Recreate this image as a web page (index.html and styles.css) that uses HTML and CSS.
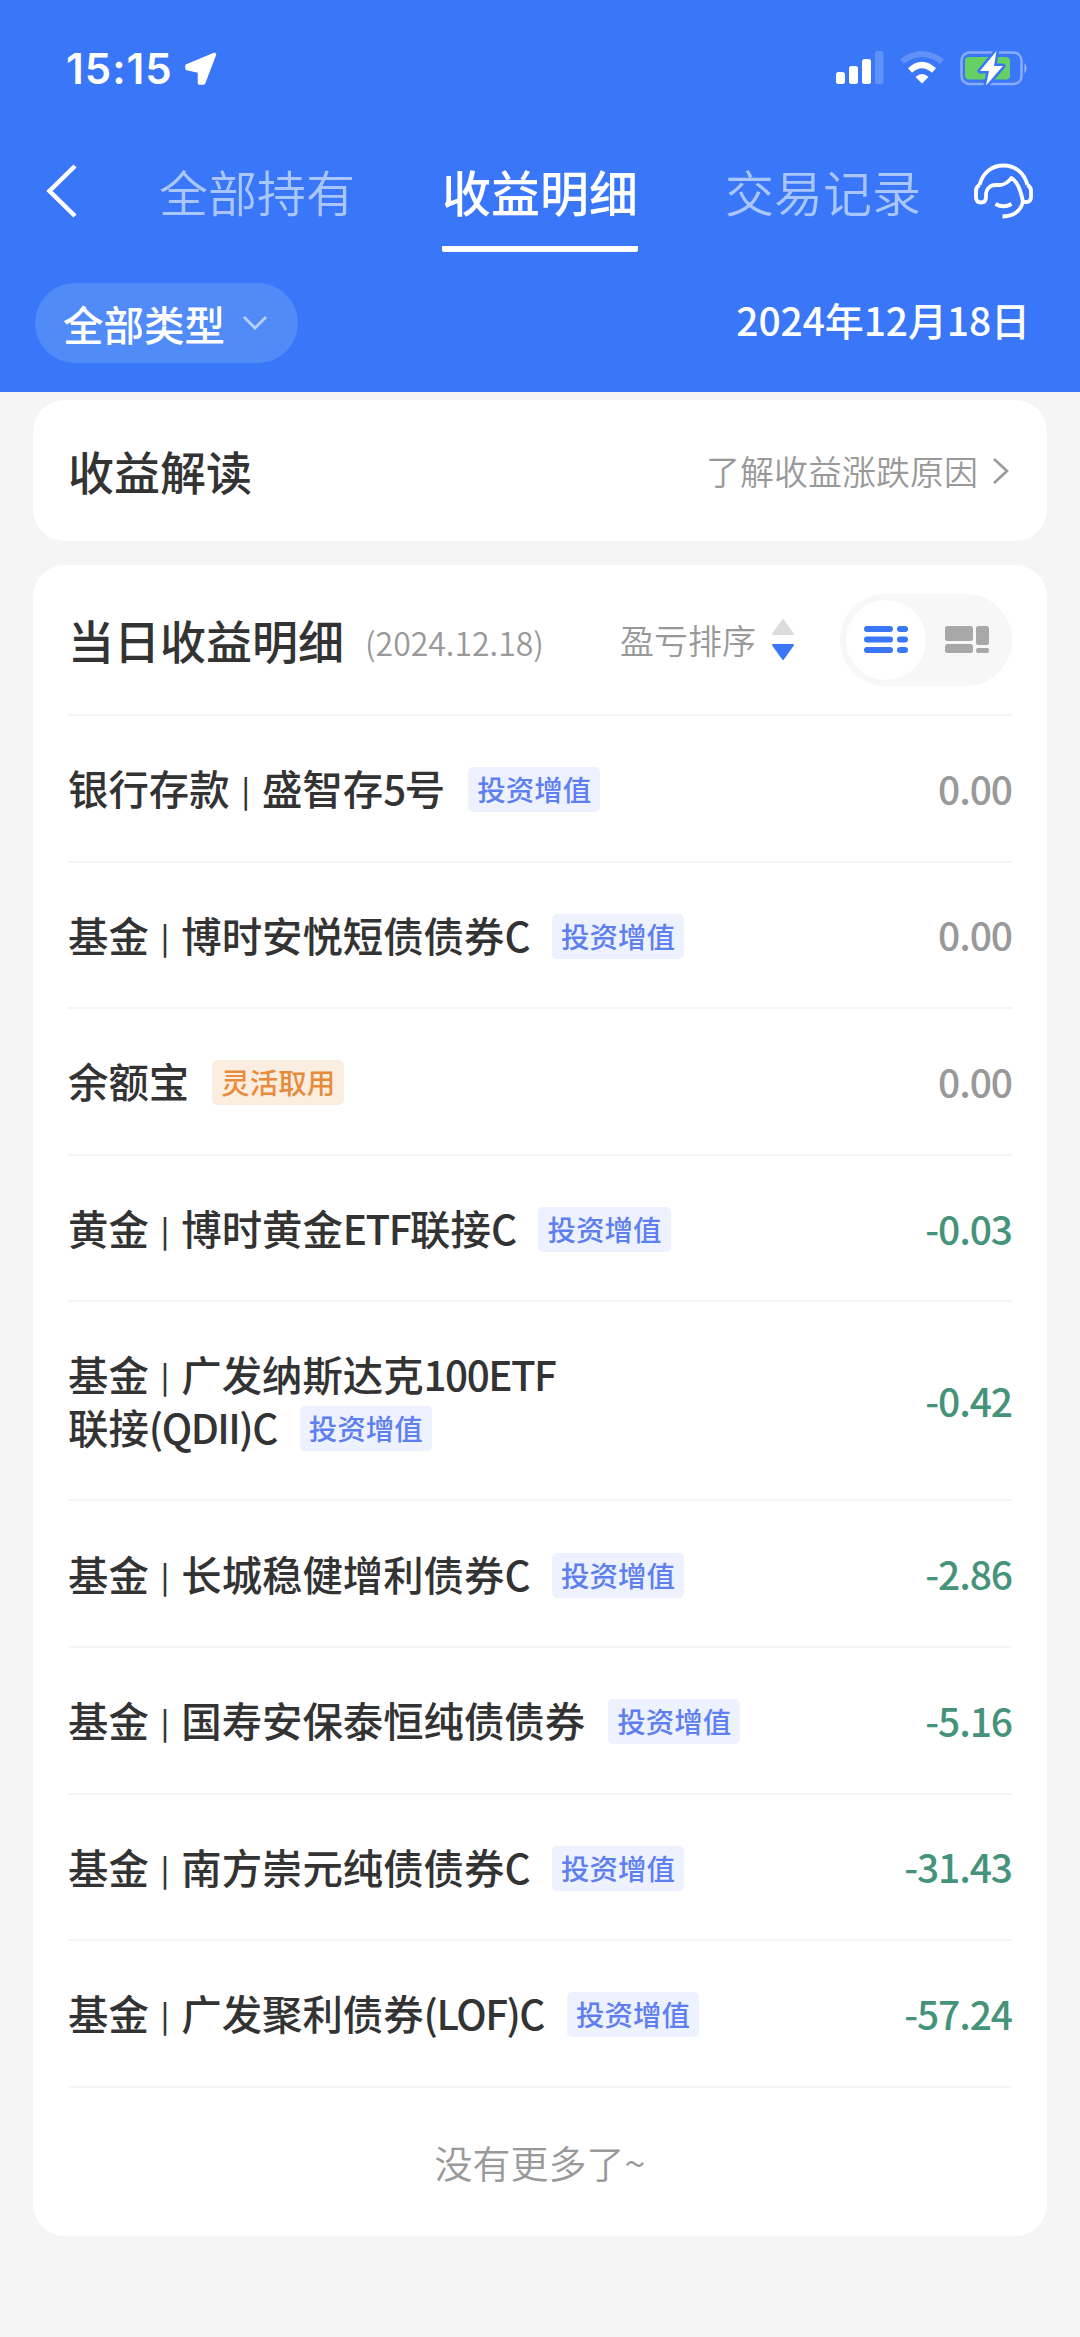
FILE: index.html
```html
<!DOCTYPE html>
<html lang="zh-CN">
<head>
<meta charset="utf-8">
<title>收益明细</title>
<link rel="stylesheet" href="styles.css">
</head>
<body>
<header class="header">
  <div class="status">
    <div class="status-left">
      <span class="clock">15:15</span>
      <svg class="location" width="34" height="34" viewBox="0 0 34 36" preserveAspectRatio="none"><path d="M30.500 2.500 19.500 33H15.500V20.500L3 17.500V14.500Z" fill="#fff" stroke="#fff" stroke-width="3.500" stroke-linejoin="round"/></svg>
    </div>
    <div class="status-right">
      <svg width="48" height="34" viewBox="0 0 48 34"><g fill="#fff"><rect x="0" y="22" width="9" height="12" rx="2.500"/><rect x="13" y="16" width="9" height="18" rx="2.500"/><rect x="26" y="9" width="9" height="25" rx="2.500"/><rect x="39" y="1" width="8.500" height="33" rx="2.500" opacity=".2"/></g></svg>
      <svg width="44" height="34" viewBox="0 0 44 34"><path d="M22 33.500 15.500 27Q22 21 28.500 27Z" fill="#fff"/><path d="M10 20.500Q22 9.500 34 20.500" fill="none" stroke="#fff" stroke-width="6"/><path d="M2 11.500Q22-3.500 42 11.500" fill="none" stroke="#fff" stroke-width="6" opacity=".2"/></svg>
      <svg width="70" height="38" viewBox="0 0 70 38"><rect x="1.500" y="2.500" width="60" height="31.500" rx="8" fill="none" stroke="#fff" stroke-width="2.500" opacity=".4"/><rect x="5" y="7" width="45" height="22.500" rx="4" fill="#65d064"/><path d="M64.500 13q4 5 0 11z" fill="#fff" opacity=".5"/><path d="M36.500 1 20 21H29L26 35.500 43 16H34Z" fill="#fff" stroke="#3976f8" stroke-width="5" paint-order="stroke" stroke-linejoin="round"/></svg>
    </div>
  </div>
  <nav class="nav">
    <svg class="back" width="32" height="54" viewBox="0 0 32 54"><path d="M29 2 3.500 27 29 52" fill="none" stroke="#fff" stroke-width="4.500"/></svg>
    <span class="tab">全部持有</span>
    <span class="tab tab-on">收益明细</span>
    <span class="tab">交易记录</span>
    <svg class="service" width="60" height="58" viewBox="0 0 60 58"><g fill="none" stroke="#fff" stroke-width="3.800" stroke-linejoin="round"><path d="M5.500 22C9 9.500 18 2.500 29.500 2.500S50 9.500 53.500 22"/><path d="M5.500 22Q2 24 2 28V34Q2 39.500 7 39.500T12 34V32C12 26 16 22 22 22H27Q33 21 37.300 15Q44 18.500 47.700 33L49 39H52Q57 39 57 34V28Q57 24 53.500 22"/><path d="M49 38Q46 53 28.500 53.500M21.500 41q8 4.500 16 0"/></g></svg>
  </nav>
  <div class="filters">
    <div class="pill"><span>全部类型</span><svg width="26" height="18" viewBox="0 0 26 18"><path d="M2 3 13 14 24 3" fill="none" stroke="#b9d0ff" stroke-width="2.800"/></svg></div>
    <span class="date">2024年12月18日</span>
  </div>
</header>
<main class="main">
  <section class="card insight">
    <h2 class="title">收益解读</h2>
    <a class="more"><span>了解收益涨跌原因</span><svg width="18" height="28" viewBox="0 0 18 28"><path d="M2 2 15 14 2 26" fill="none" stroke="#999" stroke-width="2.600"/></svg></a>
  </section>
  <section class="card detail">
    <div class="detail-head">
      <h2 class="title">当日收益明细</h2>
      <span class="day">(2024.12.18)</span>
      <span class="sort">盈亏排序</span>
      <svg class="arrows" width="24" height="44" viewBox="0 0 24 44"><path d="M12 2 22 16H2Z" fill="#dcdcdc" stroke="#dcdcdc" stroke-width="2" stroke-linejoin="round"/><path d="M12 41 22 27H2Z" fill="#3976f8" stroke="#3976f8" stroke-width="2" stroke-linejoin="round"/></svg>
      <div class="toggle">
        <span class="knob"><svg width="44" height="27" viewBox="0 0 44 27"><g fill="#3976f8"><rect y="0" width="29" height="6" rx="3"/><rect y="10.500" width="29" height="6" rx="3"/><rect y="21" width="29" height="6" rx="3"/><rect x="33" y="0" width="11" height="6" rx="3"/><rect x="33" y="10.500" width="11" height="6" rx="3"/><rect x="33" y="21" width="11" height="6" rx="3"/></g></svg></span>
        <svg class="grid" width="44" height="27" viewBox="0 0 44 27"><g fill="#a8a8a8"><rect width="28" height="15" rx="2.500"/><rect y="18" width="28" height="9" rx="2.500"/><rect x="31" width="13" height="19" rx="2.500"/><rect x="31" y="22" width="13" height="5" rx="2"/></g></svg>
      </div>
    </div>
    <ul class="list">
      <li class="row"><div class="name">银行存款<i>|</i>盛智存<b>5</b>号<span class="tag">投资增值</span></div><span class="num zero">0.00</span></li>
      <li class="row"><div class="name">基金<i>|</i>博时安悦短债债券<b>C</b><span class="tag">投资增值</span></div><span class="num zero">0.00</span></li>
      <li class="row"><div class="name">余额宝<span class="tag tag-flex">灵活取用</span></div><span class="num zero">0.00</span></li>
      <li class="row"><div class="name">黄金<i>|</i>博时黄金<b>ETF</b>联接<b>C</b><span class="tag">投资增值</span></div><span class="num">-0.03</span></li>
      <li class="row row-tall"><div class="name">基金<i>|</i>广发纳斯达克<b>100ETF</b><br>联接<b>(QDII)C</b><span class="tag">投资增值</span></div><span class="num">-0.42</span></li>
      <li class="row"><div class="name">基金<i>|</i>长城稳健增利债券<b>C</b><span class="tag">投资增值</span></div><span class="num">-2.86</span></li>
      <li class="row"><div class="name">基金<i>|</i>国寿安保泰恒纯债债券<span class="tag">投资增值</span></div><span class="num">-5.16</span></li>
      <li class="row"><div class="name">基金<i>|</i>南方崇元纯债债券<b>C</b><span class="tag">投资增值</span></div><span class="num">-31.43</span></li>
      <li class="row"><div class="name">基金<i>|</i>广发聚利债券<b>(LOF)C</b><span class="tag">投资增值</span></div><span class="num">-57.24</span></li>
    </ul>
    <p class="end">没有更多了~</p>
  </section>
</main>
</body>
</html>
```
FILE: styles.css
```css
* { box-sizing: border-box; margin: 0; padding: 0; }
body { width: 1080px; height: 2337px; background: #f5f5f5; color: #333; font-family: "Noto Sans CJK SC", sans-serif; overflow: hidden; }
svg { display: block; flex: none; }
.header { height: 392px; background: #3976f8; color: #fff; }
.status { height: 140px; display: flex; justify-content: space-between; padding: 0 50px 0 66px; }
.status-left { display: flex; align-items: flex-start; padding-top: 52px; }
.clock { font: 600 42px/34px Inter, sans-serif; width: 118px; white-space: nowrap; letter-spacing: 1px; }
.status-right { display: flex; align-items: flex-start; gap: 16px; padding-top: 50px; }
.nav { height: 143px; padding: 0 46px; display: flex; align-items: flex-start; }
.back { margin-top: 24px; }
.tab { font-size: 49px; line-height: 72px; font-weight: 350; color: #a9c6ff; margin-top: 15px; width: 196px; height: 97px; white-space: nowrap; }
.back + .tab { margin-left: 81px; }
.tab-on { color: #fff; font-weight: 500; margin-left: 87px; margin-right: 87px; background: linear-gradient(#fff, #fff) bottom / 100% 6px no-repeat; border-radius: 2px; }
.service { margin: 23px 0 0 auto; }
.filters { height: 80px; display: flex; justify-content: space-between; padding: 0 50px 0 35px; }
.pill { width: 263px; height: 80px; border-radius: 40px; background: #518bf8; display: flex; align-items: center; padding-left: 28px; gap: 17px; font-size: 40.500px; font-weight: 500; }
.date { font-size: 39px; font-weight: 500; line-height: 72px; letter-spacing: -.1px; }
.main { padding: 8px 33px 0; }
.card { background: #fff; border-radius: 32px; padding: 0 35px; }
.insight { height: 141px; display: flex; align-items: center; justify-content: space-between; padding-right: 37px; }
.title { font-size: 46px; font-weight: 500; line-height: 68px; white-space: nowrap; margin-bottom: 2px; }
.more { display: flex; align-items: center; gap: 14px; color: #999; font-size: 34px; font-weight: 350; }
.detail { height: 1671px; margin-top: 24px; }
.detail-head { height: 149px; display: flex; align-items: center; }
.day { color: #999; font-size: 32px; font-weight: 350; margin: 5px 0 0 21px; width: 255px; }
.sort { color: #999; font-size: 34px; font-weight: 350; width: 136px; white-space: nowrap; }
.arrows { margin-left: 15px; }
.toggle { width: 172px; height: 92px; border-radius: 46px; background: #f7f7f7; margin-left: auto; padding: 6px; display: flex; align-items: center; }
.knob { width: 80px; height: 80px; border-radius: 50%; background: #fff; display: grid; place-items: center; }
.grid { margin-left: 19px; }
.list { list-style: none; border-top: 2px solid #f5f5f5; }
.row { height: 146.600px; border-bottom: 2px solid #f5f5f5; display: flex; align-items: center; justify-content: space-between; padding-bottom: 1px; }
.row-tall { height: 199px; }
.name { font-size: 40.400px; line-height: 53px; font-weight: 500; white-space: nowrap; }
.name i { font-style: normal; font-size: 30px; margin: 0 12px; vertical-align: 3px; line-height: 1; }
.name b { font-weight: 500; letter-spacing: -1.500px; }
.tag { display: inline-block; height: 45px; line-height: 43px; padding: 0 9px; margin-left: 23px; border-radius: 5px; background: #eef1fe; color: #5e7ff0; font-size: 28.500px; font-weight: 500; vertical-align: 4px; }
.tag-flex { background: #fbeee1; color: #e78b3c; }
.num { font-size: 39px; font-weight: 500; color: #45937a; letter-spacing: -1.100px; }
.zero { color: #999; }
.end { text-align: center; color: #999; font-size: 38px; font-weight: 350; line-height: 148px; }
```
